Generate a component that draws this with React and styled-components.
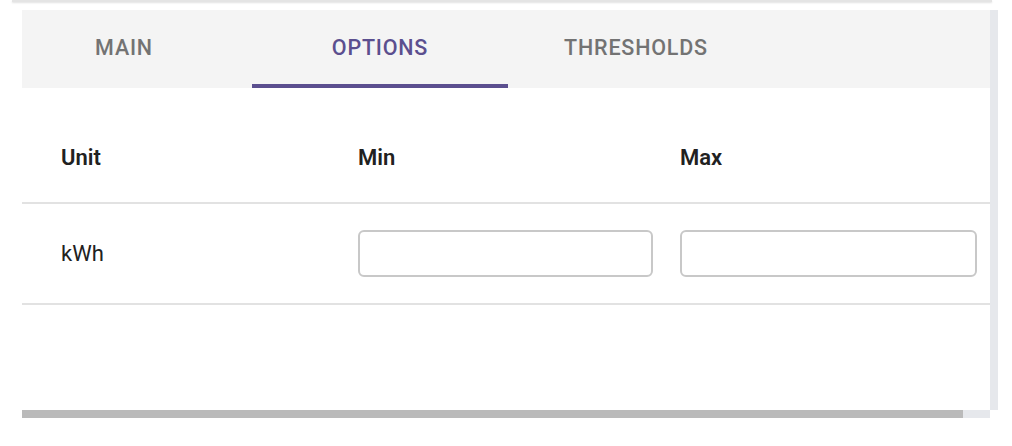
import React from 'react';
import styled, { createGlobalStyle } from 'styled-components';

const GlobalStyle = createGlobalStyle`
  body {
    margin: 0;
    background: #fff;
    font-family: Roboto, "Noto Sans", Arial, sans-serif;
  }
`;

const Page = styled.div`
  width: 1012px;
  height: 446px;
  overflow: hidden;
`;

const CardEdge = styled.div`
  margin-left: 12px;
  width: 980px;
  height: 2px;
  background: #e4e4e4;
  box-shadow: 0 1px 2px rgba(0, 0, 0, 0.12);
`;

const Panel = styled.div`
  margin: 8px 0 0 22px;
  display: grid;
  grid-template-columns: 968px 8px;
  grid-template-rows: 400px 8px;
`;

const Viewport = styled.div`
  overflow: hidden;
  background: #fff;
`;

const VTrack = styled.div`
  background: #e6e8ec;
`;

const HTrack = styled.div`
  background: #e6e8ec;
  display: flex;
`;

const Thumb = styled.div`
  width: 941px;
  background: #bababa;
`;

const TabBar = styled.div`
  height: 78px;
  background: #f4f4f4;
  display: flex;
`;

const TabList = styled.div`
  display: flex;
  margin-left: -26px;
`;

const Tab = styled.div`
  width: 256px;
  height: 78px;
  box-sizing: border-box;
  display: flex;
  align-items: center;
  justify-content: center;
  font-size: 21.5px;
  font-weight: 500;
  letter-spacing: 0.8px;
  text-transform: uppercase;
  color: ${(p) => (p.$active ? '#5b4f8f' : '#737373')};
  border-bottom: 4px solid ${(p) => (p.$active ? '#5b4f8f' : 'transparent')};
`;

const Row = styled.div`
  display: grid;
  grid-template-columns: 270px 295px 297px;
  column-gap: 27px;
  align-items: center;
  padding: 0 13px 0 39px;
  box-sizing: border-box;
  border-bottom: 2px solid #e2e2e2;
  color: #212121;
  font-size: 22px;
`;

const HeadRow = styled(Row)`
  height: 116px;
  padding-top: 24px;
  font-weight: 600;
`;

const BodyRow = styled(Row)`
  height: 101px;
  font-weight: 400;
`;

const Field = styled.input`
  height: 47px;
  box-sizing: border-box;
  border: 2px solid #c8c8c8;
  border-radius: 6px;
  background: #fff;
  font: inherit;
  padding: 0 12px;
  outline: none;
`;

export default function App() {
  return (
    <Page>
      <GlobalStyle />
      <CardEdge />
      <Panel>
        <Viewport>
          <TabBar>
            <TabList>
              <Tab>Main</Tab>
              <Tab $active>Options</Tab>
              <Tab>Thresholds</Tab>
            </TabList>
          </TabBar>
          <HeadRow>
            <span>Unit</span>
            <span>Min</span>
            <span>Max</span>
          </HeadRow>
          <BodyRow>
            <span>kWh</span>
            <Field />
            <Field />
          </BodyRow>
        </Viewport>
        <VTrack />
        <HTrack>
          <Thumb />
        </HTrack>
      </Panel>
    </Page>
  );
}
